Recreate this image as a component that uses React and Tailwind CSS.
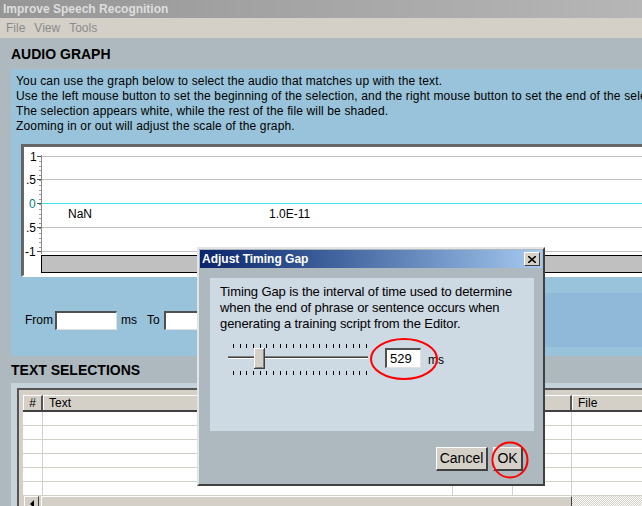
import React from "react";

const ticks = Array.from({ length: 21 }, (_, i) => 5 + i * 6.65);

function Chart() {
  const ox = 24, oy = 147;
  const X = (x) => x - ox;
  const Y = (y) => y - oy;
  const grid = [156, 179, 203, 227, 251];
  const minor = [];
  for (let y = 156; y <= 252; y += 4.8) minor.push(y);
  return (
    <svg width="640" height="128" className="block" style={{ fontFamily: "'Liberation Sans', Arial, sans-serif" }}>
      {grid.map((g, i) => (
        <line key={i} x1={X(41)} x2={640} y1={Y(g) + 0.5} y2={Y(g) + 0.5} stroke={i === 2 ? "#3ee4ef" : "#c0c0c0"} strokeWidth="1" />
      ))}
      <line x1={X(41) + 0.5} x2={X(41) + 0.5} y1={Y(155)} y2={Y(254)} stroke="#8a8a8a" />
      {minor.map((m, i) => (
        <line key={i} x1={X(39)} x2={X(41)} y1={Math.round(Y(m)) + 0.5} y2={Math.round(Y(m)) + 0.5} stroke="#9a9a9a" />
      ))}
      {grid.map((g, i) => (
        <line key={i} x1={X(37)} x2={X(41)} y1={Y(g) + 0.5} y2={Y(g) + 0.5} stroke="#505050" />
      ))}
      <text x={X(30)} y={Y(161)} fontSize="12" fill="#000">1</text>
      <text x={X(26)} y={Y(184)} fontSize="12" fill="#000">.5</text>
      <text x={X(29)} y={Y(208)} fontSize="12" fill="#008080">0</text>
      <text x={X(26)} y={Y(232)} fontSize="12" fill="#000">.5</text>
      <text x={X(25)} y={Y(256)} fontSize="12" fill="#000">-1</text>
      <text x={X(68)} y={Y(218)} fontSize="12" fill="#000">NaN</text>
      <text x={X(269)} y={Y(218)} fontSize="12" fill="#000">1.0E-11</text>
      <rect x={X(41) + 0.5} y={Y(255) + 0.5} width="640" height="17" fill="#c0c0c0" stroke="#000" />
    </svg>
  );
}

function Slider() {
  return (
    <svg width="144" height="34" className="block">
      {ticks.map((t, i) => (
        <line key={"a" + i} x1={Math.round(t) + 0.5} x2={Math.round(t) + 0.5} y1="1" y2="5" stroke="#000" />
      ))}
      {ticks.map((t, i) => (
        <line key={"b" + i} x1={Math.round(t) + 0.5} x2={Math.round(t) + 0.5} y1="28" y2="32" stroke="#000" />
      ))}
      <line x1="0" x2="140" y1="13.5" y2="13.5" stroke="#808080" />
      <line x1="0" x2="140" y1="14.5" y2="14.5" stroke="#404040" />
      <line x1="0" x2="140" y1="15.5" y2="15.5" stroke="#ffffff" />
      <rect x="26" y="5" width="11" height="21" fill="#d4d0c8" />
      <line x1="26.5" x2="26.5" y1="5" y2="26" stroke="#ffffff" />
      <line x1="26" x2="37" y1="5.5" y2="5.5" stroke="#ffffff" />
      <line x1="36.5" x2="36.5" y1="5" y2="26" stroke="#404040" />
      <line x1="26" x2="37" y1="25.5" y2="25.5" stroke="#404040" />
      <line x1="35.5" x2="35.5" y1="6" y2="25" stroke="#808080" />
      <line x1="27" x2="36" y1="24.5" y2="24.5" stroke="#808080" />
    </svg>
  );
}

function Button({ children, className = "" }) {
  return (
    <div className={"h-[24px] flex items-center justify-center bg-[#d4d0c8] border-t border-l border-t-white border-l-white border-r-2 border-b-2 border-r-[#404040] border-b-[#404040] text-[14px] text-black " + className}>
      {children}
    </div>
  );
}

export default function App() {
  return (
    <div className="relative w-[642px] h-[506px] overflow-hidden bg-[#aeb9bf] flex flex-col font-['Liberation_Sans',Arial,sans-serif] text-black">
      {/* Title bar */}
      <div className="h-[18px] shrink-0 bg-gradient-to-r from-[#969696] to-[#b6b6b6] flex items-center pl-[3px]">
        <span className="text-[12px] font-bold text-[#dedede] leading-none">Improve Speech Recognition</span>
      </div>
      {/* Menu */}
      <div className="h-[20px] shrink-0 bg-[#d4d0c8] flex items-center pl-[6px] gap-[9px] text-[12px] text-[#8a8a8a]">
        <span>File</span>
        <span>View</span>
        <span>Tools</span>
      </div>
      {/* Audio graph header */}
      <div className="h-[31px] shrink-0 flex items-center pl-[11px] pt-[2px]">
        <span className="text-[14px] font-bold">AUDIO GRAPH</span>
      </div>
      {/* Blue panel */}
      <div className="h-[287px] shrink-0 ml-[11px] bg-[#99c3da] flex flex-col pt-[5px] pb-[9px]">
        <div className="pl-[5px] text-[12px] leading-[15px] whitespace-nowrap tracking-[0.15px]">
          <div>You can use the graph below to select the audio that matches up with the text.</div>
          <div>Use the left mouse button to set the beginning of the selection, and the right mouse button to set the end of the selection.</div>
          <div>The selection appears white, while the rest of the file will be shaded.</div>
          <div>Zooming in or out will adjust the scale of the graph.</div>
        </div>
        <div className="mt-[10px] ml-[10px] mr-[-20px] h-[133px] bg-white border-t-[3px] border-l-[3px] border-t-[#666] border-l-[#666] border-b-2 border-b-white overflow-hidden">
          <Chart />
        </div>
        <div className="mt-[16px] h-[54px] flex items-center text-[12px]">
          <span className="ml-[14px]">From</span>
          <div className="ml-[2px] w-[62px] h-[19px] bg-white border-t-2 border-l-2 border-t-[#505050] border-l-[#505050] border-b border-r border-b-[#e0e0e0] border-r-[#e0e0e0]" />
          <span className="ml-[4px]">ms</span>
          <span className="ml-[10px]">To</span>
          <div className="ml-[4px] w-[62px] h-[19px] bg-white border-t-2 border-l-2 border-t-[#505050] border-l-[#505050] border-b border-r border-b-[#e0e0e0] border-r-[#e0e0e0]" />
          <div className="ml-[40px] flex-1 self-stretch bg-[#90b9d9]" />
        </div>
      </div>
      {/* Text selections header */}
      <div className="h-[27px] shrink-0 flex items-center pl-[11px] pt-[1px]">
        <span className="text-[14px] font-bold">TEXT SELECTIONS</span>
      </div>
      {/* Table panel */}
      <div className="flex-1 ml-[11px] bg-[#c6d2da] pt-[5px] pl-[6px] overflow-hidden">
        <div className="h-full bg-[#d4d0c8] border-t-2 border-l-2 border-t-[#555] border-l-[#555] pt-[5px] pl-[4px] flex flex-col">
          <div className="h-[17px] shrink-0 flex border-b-2 border-b-[#404040] text-[12px]">
            <div className="w-[20px] flex items-center justify-center border-t border-l border-t-white border-l-white border-r-2 border-r-[#555]">#</div>
            <div className="w-[410px] flex items-center pl-[5px] border-t border-l border-t-white border-l-white border-r-2 border-r-[#555]">Text</div>
            <div className="w-[60px] border-t border-l border-t-white border-l-white border-r-2 border-r-[#555]" />
            <div className="w-[59px] border-t border-l border-t-white border-l-white border-r-2 border-r-[#555]" />
            <div className="flex-1 flex items-center pl-[5px] border-t border-l border-t-white border-l-white">File</div>
          </div>
          <div className="flex flex-col bg-white">
            {[0, 1, 2, 3, 4, 5].map((r) => (
              <div key={r} className="h-[14px] flex border-b border-b-[#d4d0c8]">
                <div className="w-[20px] border-r border-r-[#d4d0c8]" />
                <div className="w-[410px] border-r border-r-[#d4d0c8]" />
                <div className="w-[60px] border-r border-r-[#d4d0c8]" />
                <div className="w-[59px] border-r border-r-[#d4d0c8]" />
                <div className="flex-1" />
              </div>
            ))}
          </div>
          <div className="h-[16px] shrink-0 flex bg-[#d4d0c8]">
            <div className="ml-[1px] w-[15px] h-[16px] flex items-center justify-center border-t border-l border-t-white border-l-white border-r border-b border-r-[#404040] border-b-[#404040]">
              <div className="w-0 h-0 border-y-[4px] border-y-transparent border-r-[4px] border-r-black" />
            </div>
            <div className="ml-[2px] w-[531px] h-[16px] bg-[#d4d0c8] border-t border-l border-t-white border-l-white border-r border-b border-r-[#404040] border-b-[#404040]" />
            <div className="flex-1 bg-[repeating-conic-gradient(#d4d0c8_0_25%,#ffffff_0_50%)] bg-[length:2px_2px]" />
          </div>
        </div>
      </div>

      {/* Dialog */}
      <div className="absolute left-[197px] top-[247px] w-[348px] h-[239px] bg-[#aeb9bf] border-2 border-t-[#e4e4e4] border-l-[#e4e4e4] border-r-[#404040] border-b-[#404040] p-[1px] flex flex-col">
        <div className="h-[18px] shrink-0 bg-gradient-to-r from-[#0a246a] to-[#a6caf0] flex items-center pl-[2px] pr-[2px]">
          <span className="text-[12px] font-bold text-white flex-1">Adjust Timing Gap</span>
          <div className="w-[16px] h-[14px] bg-[#d4d0c8] border-t border-l border-t-white border-l-white border-r border-b border-r-[#404040] border-b-[#404040] flex items-center justify-center">
            <svg width="8" height="7" viewBox="0 0 8 7"><path d="M0 0 L8 7 M8 0 L0 7" stroke="#000" strokeWidth="1.6" /></svg>
          </div>
        </div>
        <div className="mt-[10px] ml-[10px] mr-[8px] h-[153px] bg-[#cdd9e3] pt-[6px] pl-[10px]">
          <div className="text-[13px] leading-[16px] whitespace-nowrap tracking-[-0.1px]">
            <div>Timing Gap is the interval of time used to determine</div>
            <div>when the end of phrase or sentence occurs when</div>
            <div>generating a training script from the Editor.</div>
          </div>
          <div className="mt-[11px] flex items-start">
            <div className="ml-[8px]"><Slider /></div>
            <div className="ml-[13px] mt-[5px] w-[36px] h-[20px] bg-white border-t-2 border-l-2 border-t-[#505050] border-l-[#505050] border-b border-r border-b-[#e0e0e0] border-r-[#e0e0e0] text-[13px] flex items-center pl-[3px]">529</div>
            <span className="ml-[7px] mt-[8px] text-[12px]">ms</span>
          </div>
        </div>
        <div className="mt-[16px] flex justify-end pr-[19px] gap-[5px]">
          <Button className="w-[52px]">Cancel</Button>
          <Button className="w-[30px]">OK</Button>
        </div>
        <svg className="absolute left-[170px] top-[88px]" width="70" height="44">
          <ellipse cx="35" cy="22" rx="33" ry="20" fill="none" stroke="#ff0000" strokeWidth="2" />
        </svg>
        <svg className="absolute left-[292px] top-[192px]" width="38" height="38">
          <ellipse cx="19" cy="19" rx="17.5" ry="17.5" fill="none" stroke="#ff0000" strokeWidth="2" />
        </svg>
      </div>
    </div>
  );
}
